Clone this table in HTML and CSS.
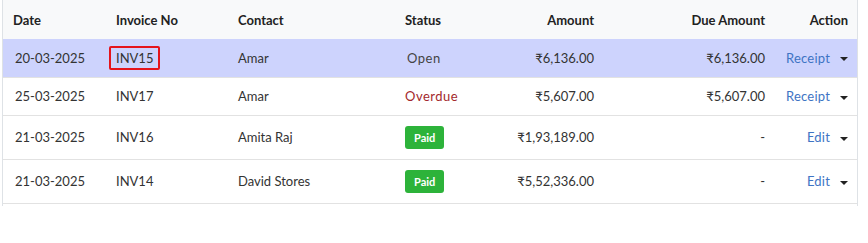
FILE: index.html
```html
<!DOCTYPE html>
<html>
<head>
<meta charset="utf-8">
<link rel="stylesheet" href="styles.css">
</head>
<body>
<div class="wrap">
<table class="inv">
  <colgroup>
    <col class="c-date"><col class="c-inv"><col class="c-contact"><col class="c-status"><col class="c-amt"><col class="c-due"><col class="c-act">
  </colgroup>
  <thead>
    <tr>
      <th>Date</th><th>Invoice No</th><th>Contact</th><th>Status</th><th class="r">Amount</th><th class="r">Due Amount</th><th class="r">Action</th>
    </tr>
  </thead>
  <tbody>
    <tr class="sel">
      <td>20-03-2025</td><td><span class="mark">INV15</span></td><td>Amar</td><td><span class="st-open">Open</span></td><td class="r">₹6,136.00</td><td class="r">₹6,136.00</td>
      <td class="r"><span class="act">Receipt</span><span class="caret"></span></td>
    </tr>
    <tr>
      <td>25-03-2025</td><td>INV17</td><td>Amar</td><td><span class="st-over">Overdue</span></td><td class="r">₹5,607.00</td><td class="r">₹5,607.00</td>
      <td class="r"><span class="act">Receipt</span><span class="caret"></span></td>
    </tr>
    <tr class="tall">
      <td>21-03-2025</td><td>INV16</td><td>Amita Raj</td><td><span class="badge">Paid</span></td><td class="r">₹1,93,189.00</td><td class="r">-</td>
      <td class="r"><span class="act">Edit</span><span class="caret"></span></td>
    </tr>
    <tr class="tall">
      <td>21-03-2025</td><td>INV14</td><td>David Stores</td><td><span class="badge">Paid</span></td><td class="r">₹5,52,336.00</td><td class="r">-</td>
      <td class="r"><span class="act">Edit</span><span class="caret"></span></td>
    </tr>
  </tbody>
</table>
</div>
</body>
</html>
```
FILE: styles.css
```css
html, body { margin: 0; padding: 0; background: #fff; }
body { font-family: Lato, "Noto Sans", "DejaVu Sans", sans-serif; font-size: 13px; color: #333; }
.wrap {
  margin-left: 2px;
  width: 854px;
  border-left: 1px solid #dee2e6;
  border-right: 1px solid #dee2e6;
  padding-bottom: 2px;
}
.inv { width: 100%; border-collapse: collapse; table-layout: fixed; }
.c-date { width: 103px; }
.c-inv { width: 122px; }
.c-contact { width: 167px; }
.c-status { width: 105px; }
.c-amt { width: 104px; }
.c-due { width: 171px; }
.c-act { width: auto; }
th {
  background: #f8f9fa;
  font-weight: 700;
  color: #222;
  text-align: left;
  height: 39px;
  padding: 0 10px;
  box-sizing: border-box;
  vertical-align: middle;
}
td {
  height: 38px;
  padding: 0 10px;
  box-sizing: border-box;
  border-bottom: 1px solid #e2e2e2;
  vertical-align: middle;
  white-space: nowrap;
}
td:first-child { padding-left: 12px; }
tr.tall td { height: 44px; }
tr.sel td { background: #cdd3fd; border-bottom-color: #e2e2e2; }
.r { text-align: right; }
th.r { text-align: right; }
td.r:last-child, th.r:last-child { padding-right: 9px; }
.mark {
  display: inline-block;
  border: 2px solid #e5141b;
  border-radius: 2px;
  padding: 2px 5px 2px 5px;
  margin-left: -7px;
}
.st-open { color: #444; letter-spacing: 0.5px; font-size: 13px; margin-left: 2px; }
.st-over { color: #a3282c; letter-spacing: 0.5px; font-size: 13px; }
.badge {
  display: inline-block;
  background: #2db33a;
  color: #fff;
  font-weight: 700;
  font-size: 11px;
  line-height: 23px;
  padding: 0 9px;
  border-radius: 3px;
}
.act { color: #3e74c4; font-size: 13px; letter-spacing: 0.2px; }
.caret {
  display: inline-block;
  width: 0; height: 0;
  border-left: 4px solid transparent;
  border-right: 4px solid transparent;
  border-top: 4px solid #222;
  margin-left: 10px;
  vertical-align: middle;
}
```
